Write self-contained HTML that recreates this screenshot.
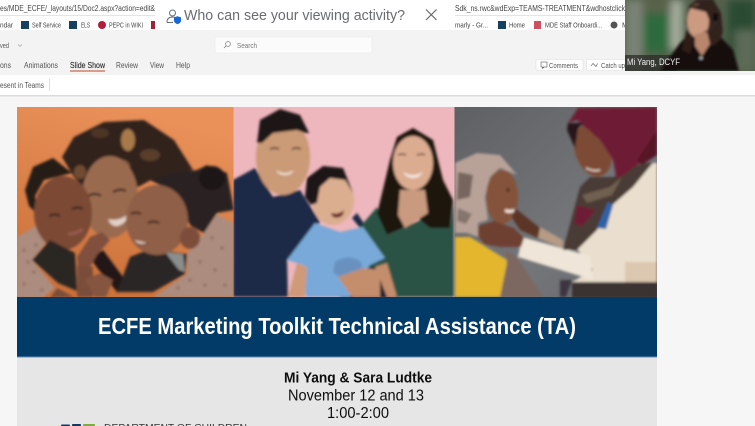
<!DOCTYPE html>
<html><head><meta charset="utf-8"><style>
html,body{margin:0;padding:0;width:755px;height:426px;overflow:hidden;background:#f6f6f6}
svg{display:block}
text{font-family:"Liberation Sans",sans-serif}
</style></head><body>
<svg width="755" height="426" viewBox="0 0 755 426" xmlns="http://www.w3.org/2000/svg">
<defs>
<filter id="b1" x="-10%" y="-10%" width="120%" height="120%"><feGaussianBlur stdDeviation="1.400"/></filter>
<filter id="b3" x="-20%" y="-20%" width="140%" height="140%"><feGaussianBlur stdDeviation="4"/></filter>
<filter id="t"><feGaussianBlur stdDeviation="0.3"/></filter>
<linearGradient id="or" x1="0.5" y1="0" x2="0.2" y2="1"><stop offset="0" stop-color="#ea9059"/><stop offset="1" stop-color="#c96f38"/></linearGradient>
<linearGradient id="gr" x1="0" y1="0" x2="1" y2="1"><stop offset="0" stop-color="#5e6064"/><stop offset="0.6" stop-color="#74767a"/><stop offset="1" stop-color="#64666a"/></linearGradient>
<clipPath id="p1"><rect x="17" y="107" width="216.500" height="190"/></clipPath>
<clipPath id="p2"><rect x="233.500" y="107" width="221" height="190"/></clipPath>
<clipPath id="p3"><rect x="454.500" y="107" width="202.500" height="190"/></clipPath>
<clipPath id="v"><rect x="625" y="0" width="130" height="71"/></clipPath>
</defs>

<!-- browser chrome -->
<rect width="755" height="426" fill="#f6f6f6"/>
<rect width="755" height="30" fill="#fff"/>
<rect y="15" width="755" height="1" fill="#e4e4e4"/>
<rect y="30" width="755" height="45" fill="#f3f3f3"/>
<rect y="75" width="755" height="20" fill="#fff"/>
<rect y="95" width="755" height="1.500" fill="#dcdcdc"/>

<g filter="url(#t)" fill="#444">
<text x="0" y="11" font-size="8" textLength="155" lengthAdjust="spacingAndGlyphs">es/MDE_ECFE/_layouts/15/Doc2.aspx?action=edit&amp;</text>
<text x="455" y="11" font-size="8" textLength="170" lengthAdjust="spacingAndGlyphs">Sdk_ns.rwc&amp;wdExp=TEAMS-TREATMENT&amp;wdhostclick</text>
<text x="0" y="27.500" font-size="7.200" textLength="13" lengthAdjust="spacingAndGlyphs">ndar</text>
<rect x="21" y="21" width="8" height="8" fill="#123f5f"/>
<text x="32" y="27.500" font-size="7.200" textLength="29" lengthAdjust="spacingAndGlyphs">Self Service</text>
<rect x="69" y="21" width="8" height="8" fill="#123f5f"/>
<text x="81" y="27.500" font-size="7.200" textLength="9" lengthAdjust="spacingAndGlyphs">ELS</text>
<circle cx="102" cy="25" r="4" fill="#b21f3c"/>
<text x="109" y="27.500" font-size="7.200" textLength="34" lengthAdjust="spacingAndGlyphs">PEPC in WIKI</text>
<rect x="151" y="21" width="6" height="8" fill="#a32035"/>
<text x="455" y="27.500" font-size="7.200" textLength="33" lengthAdjust="spacingAndGlyphs">marly - Gr...</text>
<rect x="498" y="21" width="8" height="8" fill="#123f5f"/>
<text x="509" y="27.500" font-size="7.200" textLength="16" lengthAdjust="spacingAndGlyphs">Home</text>
<rect x="534" y="21" width="7" height="8" fill="#d05060"/>
<text x="545" y="27.500" font-size="7.200" textLength="57" lengthAdjust="spacingAndGlyphs">MDE Staff Onboardi...</text>
<circle cx="614" cy="25" r="3.500" fill="#555"/>
<text x="622" y="27.500" font-size="7.200">M</text>

<text x="0" y="48" font-size="7.500" fill="#555" textLength="9" lengthAdjust="spacingAndGlyphs">ved</text>
<path d="M18 44.500l2 2 2-2" fill="none" stroke="#999" stroke-width=".6"/>
<rect x="215" y="37" width="157" height="16" rx="1.500" fill="#fbfbfb" stroke="#eaeaea" stroke-width=".6"/>
<circle cx="228" cy="44" r="2.400" fill="none" stroke="#666" stroke-width=".6"/>
<path d="M226.200 45.800l-2.200 2.200" stroke="#666" stroke-width=".6"/>
<text x="237" y="48" font-size="7.500" fill="#777" textLength="20" lengthAdjust="spacingAndGlyphs">Search</text>

<text x="0" y="68" font-size="7.800" fill="#555" textLength="11" lengthAdjust="spacingAndGlyphs">ons</text>
<text x="24" y="68" font-size="7.800" fill="#555" textLength="34" lengthAdjust="spacingAndGlyphs">Animations</text>
<text x="70" y="68" font-size="7.800" fill="#333" textLength="35" lengthAdjust="spacingAndGlyphs" stroke="#333" stroke-width=".15">Slide Show</text>
<rect x="70" y="70.500" width="35" height="1" fill="#b7472a"/>
<text x="116" y="68" font-size="7.800" fill="#555" textLength="22" lengthAdjust="spacingAndGlyphs">Review</text>
<text x="150" y="68" font-size="7.800" fill="#555" textLength="14" lengthAdjust="spacingAndGlyphs">View</text>
<text x="176" y="68" font-size="7.800" fill="#555" textLength="14" lengthAdjust="spacingAndGlyphs">Help</text>

<rect x="536" y="59.500" width="47" height="11" rx="1.500" fill="#fff" stroke="#ddd" stroke-width=".6"/>
<rect x="541" y="62" width="6" height="5" fill="none" stroke="#555" stroke-width=".6"/>
<path d="M542.500 67v1.500l1.800-1.500" fill="none" stroke="#555" stroke-width=".6"/>
<text x="549" y="68" font-size="7" fill="#555" textLength="29" lengthAdjust="spacingAndGlyphs">Comments</text>
<rect x="586.500" y="59.500" width="44" height="11" rx="1.500" fill="#fff" stroke="#ddd" stroke-width=".6"/>
<path d="M591 66l2-2.500 1.500 1.500 1.500 1.500 1.500-3" fill="none" stroke="#555" stroke-width=".6"/>
<text x="601" y="68" font-size="7" fill="#555" textLength="24" lengthAdjust="spacingAndGlyphs">Catch up</text>

<text x="0" y="88" font-size="7.800" fill="#555" textLength="44" lengthAdjust="spacingAndGlyphs">esent in Teams</text>
<rect x="49" y="79" width=".7" height="12" fill="#d0d0d0"/>
</g>

<!-- popup -->
<rect x="155" y="0" width="300" height="29.500" fill="#fff"/>
<g filter="url(#t)">
<circle cx="172.500" cy="13" r="3" fill="none" stroke="#6b6f76" stroke-width="1"/>
<path d="M167 22.500c0-4 2.500-5.500 5.500-5.500 1.500 0 2.500.3 3.200.8" fill="none" stroke="#6b6f76" stroke-width="1"/>
<path d="M167 22.500h6" stroke="#6b6f76" stroke-width="1"/>
<path d="M177.500 16.200l3.500 1.200v3c0 2-1.600 3.200-3.500 3.800-1.900-.6-3.500-1.800-3.500-3.800v-3z" fill="#1468d8"/>
<text x="184" y="20" font-size="14.500" fill="#6a6c72" textLength="221" lengthAdjust="spacingAndGlyphs">Who can see your viewing activity?</text>
<path d="M426 9.500l10.500 10.500M436.500 9.500l-10.500 10.500" stroke="#666a70" stroke-width="1.200" fill="none"/>
</g>

<!-- slide -->
<rect x="17" y="297" width="640" height="60" fill="#023a68"/>
<rect x="17" y="356.500" width="640" height="1" fill="#5f8fba"/>
<rect x="17" y="357.500" width="640" height="68.500" fill="#e6e6e6"/>

<!-- photo 1 -->
<g clip-path="url(#p1)">
<rect x="17" y="107" width="217" height="190" fill="url(#or)"/>
<g filter="url(#b1)">
<!-- sleeves -->
<path d="M17 237l20-12 13 12-18 23 23 28-12 10H17z" fill="#ac8c7e"/>
<path d="M153 297l34-23v-20l16-20 14-20 17 10v73z" fill="#ac8c7e"/>
<g fill="#7a5650" opacity=".6">
<circle cx="24" cy="250" r="1.600"/><circle cx="34" cy="272" r="1.600"/><circle cx="24" cy="284" r="1.600"/><circle cx="42" cy="290" r="1.600"/><circle cx="28" cy="262" r="1.600"/><circle cx="36" cy="245" r="1.600"/>
<circle cx="200" cy="262" r="1.600"/><circle cx="215" cy="270" r="1.600"/><circle cx="205" cy="285" r="1.600"/><circle cx="222" cy="248" r="1.600"/><circle cx="190" cy="280" r="1.600"/><circle cx="225" cy="285" r="1.600"/><circle cx="212" cy="238" r="1.600"/><circle cx="178" cy="288" r="1.600"/>
</g>
<!-- mom hair -->
<path d="M62 157l12-20 30-15 40-2 30 20 19 30-25 7-17 3-13 7-50 5-14-15-6-10z" fill="#30231f"/>
<ellipse cx="128" cy="140" rx="7" ry="11" fill="#a8794a"/>
<ellipse cx="118" cy="166" rx="12" ry="7" fill="#7f5a38"/>
<ellipse cx="150" cy="155" rx="10" ry="6" fill="#5a3d2b"/>
<ellipse cx="80" cy="172" rx="6" ry="7" fill="#6f4c32"/>
<ellipse cx="100" cy="133" rx="9" ry="5" fill="#4e3526"/>
<!-- mom face -->
<ellipse cx="110" cy="197" rx="28" ry="41" fill="#9a6a4f"/>
<path d="M108 219q12 3 21-6-2 10-11 13-7 1-10-7z" fill="#e2d0c4"/>
<path d="M88 196q7-4 13 0M113 192q7-4 13-1" stroke="#2a1b16" stroke-width="2" fill="none"/>
<!-- mid dark -->
<path d="M103 250l20 27-5 16-20-24-8-11z" fill="#241715"/>
<!-- left child -->
<path d="M25 190l8-23 20-9 19 15-28 7-9 16 4 20-10-10z" fill="#261b19"/>
<ellipse cx="63" cy="213" rx="29" ry="37" fill="#7b4a36"/>
<path d="M49 216q6-3 11 0M72 209q6-3 11 0" stroke="#24130e" stroke-width="1.800" fill="none"/>
<path d="M68 234q8 0 15-5" stroke="#975a4c" stroke-width="3" fill="none"/>
<!-- clothes -->
<path d="M32 260l18-20 25 13 2 38-19-8z" fill="#2a2523"/>
<path d="M117 292l13-35 20-8 37 5-2 20-32 18z" fill="#2b2725"/>
<path d="M165 252l18 2 2 18-6-2z" fill="#8c8d8d"/>
<!-- right child hair -->
<path d="M150 180l23-7 24-3 10-5 20 8 7 37-17 3-13 20-13-7-13-20-16-20z" fill="#2b2120"/>
<ellipse cx="212" cy="178" rx="13" ry="12" fill="#1c1513"/>
<!-- right child face -->
<ellipse cx="157" cy="220" rx="31" ry="35" fill="#8f5e46"/>
<ellipse cx="190" cy="238" rx="10" ry="11" fill="#7b4e3a"/>
<path d="M131 214q5-3 10 0M148 223q6-3 11 0" stroke="#24130e" stroke-width="1.800" fill="none"/>
<path d="M133 240q6 7 15 3" fill="#e0cabd" stroke="#6b3a30" stroke-width="1"/>
<!-- hands -->
<path d="M77 257l13-20 12-5 8 8-13 15-7 12-12-2z" fill="#80503c"/>
<path d="M77 265l16 2v30H77z" fill="#7a4d3b"/>
<path d="M85 280l15-7 13 7-7 17H95z" fill="#85543f"/>
<path d="M50 298l7-10 17 9z" fill="#7a4d3b"/>
</g>
</g>

<!-- photo 2 -->
<g clip-path="url(#p2)">
<rect x="233" y="107" width="222" height="190" fill="#eeb6bd"/>
<g filter="url(#b1)">
<!-- man shirt -->
<path d="M233 180l22-12 18 29 27-7 20 32-33 38 1 37h-55z" fill="#1a2a46"/>
<path d="M352 218l8 10 5-3-8-12z" fill="#1a2a46"/>
<rect x="340" y="262" width="58" height="36" fill="#1c2030"/>
<!-- man head -->
<ellipse cx="283" cy="157" rx="27" ry="38" fill="#cb9a76"/>
<path d="M257 143l3-23 20-11 20 6 9 18-4 0-8-3-24 3-11 10z" fill="#1b1614"/>
<path d="M276 170q9 6 18 0-2 5-9 5-7 0-9-5z" fill="#efe2d8"/>
<path d="M270 149q5-2 9 0M292 149q5-2 9 0" stroke="#3a2016" stroke-width="1.500" fill="none"/>
<!-- woman sweater -->
<path d="M360 227l17-20 10 28 16-7 24-11 3 11h20l4-28v97h-58l-10-30-17 0z" fill="#2b5244"/>
<!-- woman hair -->
<path d="M378 210l12-50 7-23 16-9 20 12 10 40 10 20-3 28h-20l-13-11-14 11-16 7-10-22z" fill="#1a1311"/>
<path d="M400 190h25l3 23-23 15-7-13z" fill="#c99a7f"/>
<ellipse cx="413" cy="163" rx="20" ry="27" fill="#dcac90"/>
<path d="M403 172q10 6 20 0-3 6-10 6-7 0-10-6z" fill="#f3e6df"/>
<path d="M398 155q5-2 8 0M417 155q5-2 8 0" stroke="#33190f" stroke-width="1.300" fill="none"/>
<!-- child shirt -->
<path d="M287 260l28-37 25 9 23-5 22 31-15 7-20 32h-44l-3-32z" fill="#78a9d8"/>
<path d="M335 262q14-9 26 0l2 10-20 8-10-8z" fill="#5f88b5" opacity=".7"/>
<!-- child head -->
<ellipse cx="333" cy="200" rx="21" ry="25" fill="#dcae90"/>
<path d="M305 197l2-19 16-12 20 2 10 25-8-13-15-2-10 9-3 16-6 2z" fill="#1a1615"/>
<path d="M331 213q8 2 13-3l-1 5q-6 5-11 1z" fill="#6e2a22"/>
<!-- arms -->
<path d="M288 297l9-34 10 4-2 30z" fill="#cf9a79"/>
<path d="M375 267l12-4 10 34h-10z" fill="#c48e6c"/>
<path d="M338 277l25-9 17 2v27h-28z" fill="#c48e6c"/>
</g>
</g>

<!-- photo 3 -->
<g clip-path="url(#p3)">
<rect x="454" y="107" width="204" height="190" fill="url(#gr)"/>
<g filter="url(#b1)">
<!-- sweater -->
<path d="M578 247l19-20 13-20 23-20 20-24h4v119h-85l21-12-15-20z" fill="#eadfce"/>
<path d="M625 262h32v20h-32z" fill="#dcc7b0"/>
<!-- sleeve + forearm -->
<path d="M522 237l68 19 3 24-75-23z" fill="#efe5d8"/>
<path d="M540 227l23 13v8l-25-10z" fill="#b79b84"/>
<!-- scarf -->
<path d="M563 250l17-63 10-10h23l24-12 16-3-20 25-23 20-13 23-20 20z" fill="#4a3b36"/>
<path d="M582 195l28-8 12-10-10 18-25 8z" fill="#6f6051"/>
<path d="M597 228l11-26 5 3-7 24z" fill="#2e62a8"/>
<path d="M577 205l19 5-14 16-8-2z" fill="#6e1c34"/>
<path d="M560 280h12l-6 17h-6z" fill="#3d3640"/>
<rect x="572" y="282" width="86" height="16" fill="#3b3032"/>
<!-- woman's face + hijab -->
<ellipse cx="593" cy="150" rx="18" ry="27" fill="#7d4c35" transform="rotate(-18 593 150)"/>
<path d="M568 123L578 108 657 107 657 153 647 160 637 165 620 178 616 176 613 160 600 140 577 120z" fill="#6e1c34"/>
<path d="M568 123l-1 7 8 18 3-20 6-5z" fill="#25171a"/>
<path d="M637 160l20-30v25l-15 10z" fill="#571526"/>
<path d="M586 168q8 4 14 2" stroke="#efe0d4" stroke-width="1.500" fill="none"/>
<!-- yellow shirt + scarf lower -->
<path d="M455 237h15l37 23-2 37h-50z" fill="#e3b62e"/>
<path d="M505 250l12 7 26 40h-43l7-34z" fill="#7c6860"/>
<!-- child hijab -->
<path d="M455 163l22-10 23 2 17 20-17-7-10 9-5 20 3 23-10 3v14l-11-4h-12z" fill="#b8a298"/>
<path d="M458 172l15 3-3 22-13 3z" fill="#544640" opacity=".65"/>
<path d="M458 208l14 6-6 10-9-3z" fill="#5d4e48" opacity=".55"/>
<!-- child face -->
<ellipse cx="502" cy="197" rx="16" ry="27" fill="#85533a"/>
<path d="M505 209q7 2 11-1l-2 4q-5 2-9 0z" fill="#f0e2d8"/>
<circle cx="508" cy="190" r="1.500" fill="#1c0f0a"/>
<!-- hands -->
<path d="M478 226l16-5 20 7 10 10-3 9-21 0-16-3-6-8z" fill="#6e4130"/>
<path d="M515 208l25 20-2 10-18-8-8-12z" fill="#5b3426"/>
</g>
</g>

<!-- slide text -->
<g filter="url(#t)">
<text x="98" y="334" font-size="23" font-weight="bold" fill="#fff" textLength="478" lengthAdjust="spacingAndGlyphs">ECFE Marketing Toolkit Technical Assistance (TA)</text>
<text x="284" y="382.500" font-size="15" font-weight="bold" fill="#111" textLength="148" lengthAdjust="spacingAndGlyphs">Mi Yang &amp; Sara Ludtke</text>
<text x="288" y="400.500" font-size="15.500" fill="#111" textLength="136" lengthAdjust="spacingAndGlyphs">November 12 and 13</text>
<text x="327" y="418" font-size="15.500" fill="#111" textLength="62" lengthAdjust="spacingAndGlyphs">1:00-2:00</text>
<text x="104" y="430.500" font-size="9.500" fill="#333" textLength="143" lengthAdjust="spacingAndGlyphs">DEPARTMENT OF CHILDREN</text>
<rect x="61" y="424.500" width="9" height="2" rx="1" fill="#12365e"/>
<rect x="72" y="424" width="9" height="2.500" rx="1" fill="#12365e"/>
<rect x="83" y="424" width="12" height="2.500" rx="1" fill="#7faa3f"/>
</g>

<!-- video tile -->
<g clip-path="url(#v)">
<rect x="625" y="0" width="130" height="71" fill="#53614c"/>
<g filter="url(#b3)">
<rect x="625" y="0" width="18" height="71" fill="#7a8274"/>
<rect x="643" y="14" width="26" height="38" fill="#2d6a3e"/>
<rect x="670" y="0" width="13" height="50" fill="#a3ab9a"/>
<rect x="645" y="0" width="26" height="9" fill="#5c6449"/>
<rect x="728" y="0" width="27" height="60" fill="#2a4c33"/>
<rect x="735" y="30" width="20" height="41" fill="#5b6a56"/>
</g>
<rect x="625" y="55" width="52" height="16" fill="#2b2b28" opacity=".75"/>
<g filter="url(#b1)">
<path d="M660 71l20-28 10-10h27l16 17 6 21z" fill="#14100f"/>
<path d="M686 24l3-18 8-7h16l8 14 2 18-2 8-8 7-12-8z" fill="#33211b"/>
<path d="M682 50l5-22 6 12-3 14z" fill="#2e1e19"/>
<ellipse cx="698" cy="21" rx="11" ry="17" fill="#cc9a81"/>
<path d="M695 34l12-2 3 12-8 12-7-10z" fill="#b8866d"/>
<path d="M690 8c6-5 18-6 22 2l3 12-4 2-5-12z" fill="#33211b"/>
<rect x="713" y="13" width="5" height="8" rx="2" fill="#111"/>
<path d="M716 21q-2 8-12 11" stroke="#333" stroke-width="1.200" fill="none"/>
<circle cx="701" cy="58" r="1.500" fill="#bbb"/>
</g>
<text x="627" y="65" font-size="9" fill="#f2f2f2" textLength="53" lengthAdjust="spacingAndGlyphs">Mi Yang, DCYF</text>
</g>
</svg>
</body></html>
